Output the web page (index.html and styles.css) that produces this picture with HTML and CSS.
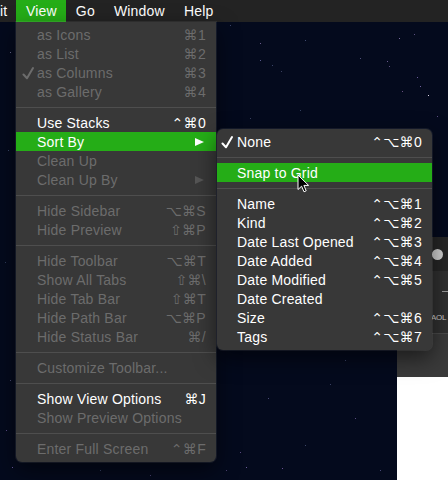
FILE: index.html
```html
<!DOCTYPE html>
<html>
<head>
<meta charset="utf-8">
<link rel="stylesheet" href="styles.css">
</head>
<body>
<div class="desktop">
  <div class="stars"></div>
  <div class="menubar">
    <span class="mb-item first">it</span>
    <span class="mb-item active">View</span>
    <span class="mb-item">Go</span>
    <span class="mb-item">Window</span>
    <span class="mb-item">Help</span>
  </div>

  <div class="window">
    <div class="win-title"><span class="light"></span></div>
    <div class="win-toolbar">
      <span class="dash"></span>
      <span class="win-text">AOL</span>
    </div>
    <div class="win-strip"></div>
    <div class="win-content"></div>
  </div>

  <div class="menu main-menu">
    <div class="row dis"><span class="chk"></span><span class="lbl">as Icons</span><span class="key">⌘1</span></div>
    <div class="row dis"><span class="chk"></span><span class="lbl">as List</span><span class="key">⌘2</span></div>
    <div class="row dis"><span class="chk"><svg class="check" viewBox="0 0 12 14"><path d="M1.5 8.5 L5 12.3 L11 2"/></svg></span><span class="lbl">as Columns</span><span class="key">⌘3</span></div>
    <div class="row dis"><span class="chk"></span><span class="lbl">as Gallery</span><span class="key">⌘4</span></div>
    <div class="sep"></div>
    <div class="row"><span class="chk"></span><span class="lbl">Use Stacks</span><span class="key">⌃⌘0</span></div>
    <div class="row hl"><span class="chk"></span><span class="lbl">Sort By</span><span class="key"><span class="tri"></span></span></div>
    <div class="row dis"><span class="chk"></span><span class="lbl">Clean Up</span><span class="key"></span></div>
    <div class="row dis"><span class="chk"></span><span class="lbl">Clean Up By</span><span class="key"><span class="tri"></span></span></div>
    <div class="sep"></div>
    <div class="row dis"><span class="chk"></span><span class="lbl">Hide Sidebar</span><span class="key">⌥⌘S</span></div>
    <div class="row dis"><span class="chk"></span><span class="lbl">Hide Preview</span><span class="key">⇧⌘P</span></div>
    <div class="sep"></div>
    <div class="row dis"><span class="chk"></span><span class="lbl">Hide Toolbar</span><span class="key">⌥⌘T</span></div>
    <div class="row dis"><span class="chk"></span><span class="lbl">Show All Tabs</span><span class="key">⇧⌘\</span></div>
    <div class="row dis"><span class="chk"></span><span class="lbl">Hide Tab Bar</span><span class="key">⇧⌘T</span></div>
    <div class="row dis"><span class="chk"></span><span class="lbl">Hide Path Bar</span><span class="key">⌥⌘P</span></div>
    <div class="row dis"><span class="chk"></span><span class="lbl">Hide Status Bar</span><span class="key">⌘/</span></div>
    <div class="sep"></div>
    <div class="row dis"><span class="chk"></span><span class="lbl">Customize Toolbar...</span><span class="key"></span></div>
    <div class="sep"></div>
    <div class="row"><span class="chk"></span><span class="lbl">Show View Options</span><span class="key">⌘J</span></div>
    <div class="row dis"><span class="chk"></span><span class="lbl">Show Preview Options</span><span class="key"></span></div>
    <div class="sep"></div>
    <div class="row dis"><span class="chk"></span><span class="lbl">Enter Full Screen</span><span class="key">⌃⌘F</span></div>
  </div>

  <div class="menu sub-menu">
    <div class="row"><span class="chk"><svg class="check" viewBox="0 0 12 14"><path d="M1.5 8.5 L5 12.3 L11 2"/></svg></span><span class="lbl">None</span><span class="key">⌃⌥⌘0</span></div>
    <div class="sep"></div>
    <div class="row hl"><span class="chk"></span><span class="lbl">Snap to Grid</span><span class="key"></span></div>
    <div class="sep"></div>
    <div class="row"><span class="chk"></span><span class="lbl">Name</span><span class="key">⌃⌥⌘1</span></div>
    <div class="row"><span class="chk"></span><span class="lbl">Kind</span><span class="key">⌃⌥⌘2</span></div>
    <div class="row"><span class="chk"></span><span class="lbl">Date Last Opened</span><span class="key">⌃⌥⌘3</span></div>
    <div class="row"><span class="chk"></span><span class="lbl">Date Added</span><span class="key">⌃⌥⌘4</span></div>
    <div class="row"><span class="chk"></span><span class="lbl">Date Modified</span><span class="key">⌃⌥⌘5</span></div>
    <div class="row"><span class="chk"></span><span class="lbl">Date Created</span><span class="key"></span></div>
    <div class="row"><span class="chk"></span><span class="lbl">Size</span><span class="key">⌃⌥⌘6</span></div>
    <div class="row"><span class="chk"></span><span class="lbl">Tags</span><span class="key">⌃⌥⌘7</span></div>
  </div>

  <svg class="cursor" viewBox="0 0 12 19">
    <path d="M1 1 L1 15.5 L4.6 12.2 L7 17.8 L9.2 16.8 L6.9 11.4 L11.6 11.4 Z"/>
  </svg>
</div>
</body>
</html>
```
FILE: styles.css
```css
html, body {
  margin: 0;
  padding: 0;
}
body {
  width: 448px;
  height: 480px;
  overflow: hidden;
  font-family: "Liberation Sans", "DejaVu Sans", sans-serif;
  font-size: 14px;
  letter-spacing: 0.2px;
}
.desktop {
  position: relative;
  width: 448px;
  height: 480px;
  background: #040a1d;
  overflow: hidden;
}
.stars {
  position: absolute;
  left: 0;
  top: 0;
  width: 1px;
  height: 1px;
  background: transparent;
  box-shadow:
    260px 43px #6a5c8c, 260px 60px #5a5a8c, 399px 38px #7a6aa0, 414px 34px #5c5080,
    360px 58px #50507a, 387px 61px #6c5c90, 389px 66px #5a4c78, 417px 77px #6a5a98,
    420px 86px #7060a0, 402px 91px #6a5080, 428px 95px #e0d8e8, 437px 116px #5a4c80,
    272px 65px #3a4468, 281px 71px #3a4060, 305px 40px #404a70, 10px 52px #6a6a90,
    8px 150px #3a4a6a, 5px 262px #2e3a5a, 10px 380px #4a4a70, 6px 430px #5a4c88,
    12px 467px #6a5aa0, 240px 452px #5a4a80, 246px 467px #6a5a98, 282px 468px #6a5090,
    345px 360px #3a4468, 268px 398px #4a4a78, 355px 418px #5a4c80, 305px 445px #3c4668,
    380px 470px #4a4a78, 330px 384px #3a4062, 226px 470px #4a4070, 100px 470px #3a4468,
    150px 475px #4a4070, 230px 25px #3a4468, 300px 110px #34405e, 250px 118px #3a4060;
}
.menubar {
  position: relative;
  display: flex;
  height: 22px;
  background: #232323;
  color: #ffffff;
  line-height: 22px;
}
.mb-item {
  padding: 0 9.5px;
}
.mb-item.first {
  padding: 0 9px 0 0;
}
.mb-item.active {
  background: #25ad17;
}

.window {
  position: absolute;
  left: 397px;
  top: 237px;
  right: 0;
  bottom: 0;
  display: flex;
  flex-direction: column;
}
.win-title {
  position: relative;
  height: 34px;
  background: #262626;
}
.light {
  position: absolute;
  left: 35px;
  top: 12px;
  width: 11px;
  height: 11px;
  border-radius: 50%;
  background: #d2d2d2;
}
.win-toolbar {
  position: relative;
  height: 62px;
  background: #303030;
  border-bottom: 1px solid #4a4a4a;
}
.dash {
  position: absolute;
  left: 45px;
  top: 20px;
  width: 8px;
  height: 1px;
  background: #9a9a9a;
}
.win-text {
  position: absolute;
  left: 34px;
  top: 42px;
  font-size: 8px;
  color: #d0d0d0;
  letter-spacing: -0.3px;
}
.win-strip {
  height: 43px;
  background: #3a3a3a;
}
.win-content {
  flex: 1;
  background: #ffffff;
}

.menu {
  position: absolute;
  background: #383838;
  padding: 3px 0 4px;
  box-shadow: 0 0 0 1px rgba(255, 255, 255, 0.07), 0 8px 22px rgba(0, 0, 0, 0.55);
}
.main-menu {
  left: 16px;
  top: 22px;
  width: 200px;
  border-radius: 0 0 6px 6px;
}
.sub-menu {
  left: 217px;
  top: 129px;
  width: 215px;
  border-radius: 6px;
}
.row {
  display: grid;
  grid-template-columns: 21px 1fr auto;
  align-items: center;
  height: 19px;
  padding-right: 10px;
  color: #ffffff;
  white-space: nowrap;
}
.sub-menu .row {
  grid-template-columns: 20px 1fr auto;
}
.row.dis {
  color: #6c6c6c;
}
.row.hl {
  background: #25ad17;
}
.chk {
  display: flex;
  align-items: center;
  height: 19px;
  padding-left: 6px;
}
.sub-menu .chk {
  padding-left: 4px;
}
.check {
  width: 12px;
  height: 14px;
  fill: none;
  stroke: currentColor;
  stroke-width: 2;
  stroke-linecap: round;
  stroke-linejoin: round;
}
.key {
  display: flex;
  align-items: center;
  justify-content: flex-end;
  font-size: 14px;
  letter-spacing: 0.3px;
}
.tri {
  width: 0;
  height: 0;
  border-left: 9px solid currentColor;
  border-top: 4.5px solid transparent;
  border-bottom: 4.5px solid transparent;
  margin-right: 2px;
}
.row.dis .tri {
  border-left-color: #555555;
}
.sep {
  height: 12px;
  display: flex;
  align-items: center;
}
.sep::before {
  content: "";
  display: block;
  width: 100%;
  height: 1px;
  background: #4e4e4e;
  margin-top: 1px;
}
.cursor {
  position: absolute;
  left: 297px;
  top: 174px;
  width: 12px;
  height: 19px;
  fill: #000000;
  stroke: #ffffff;
  stroke-width: 1;
  stroke-linejoin: round;
}
```
